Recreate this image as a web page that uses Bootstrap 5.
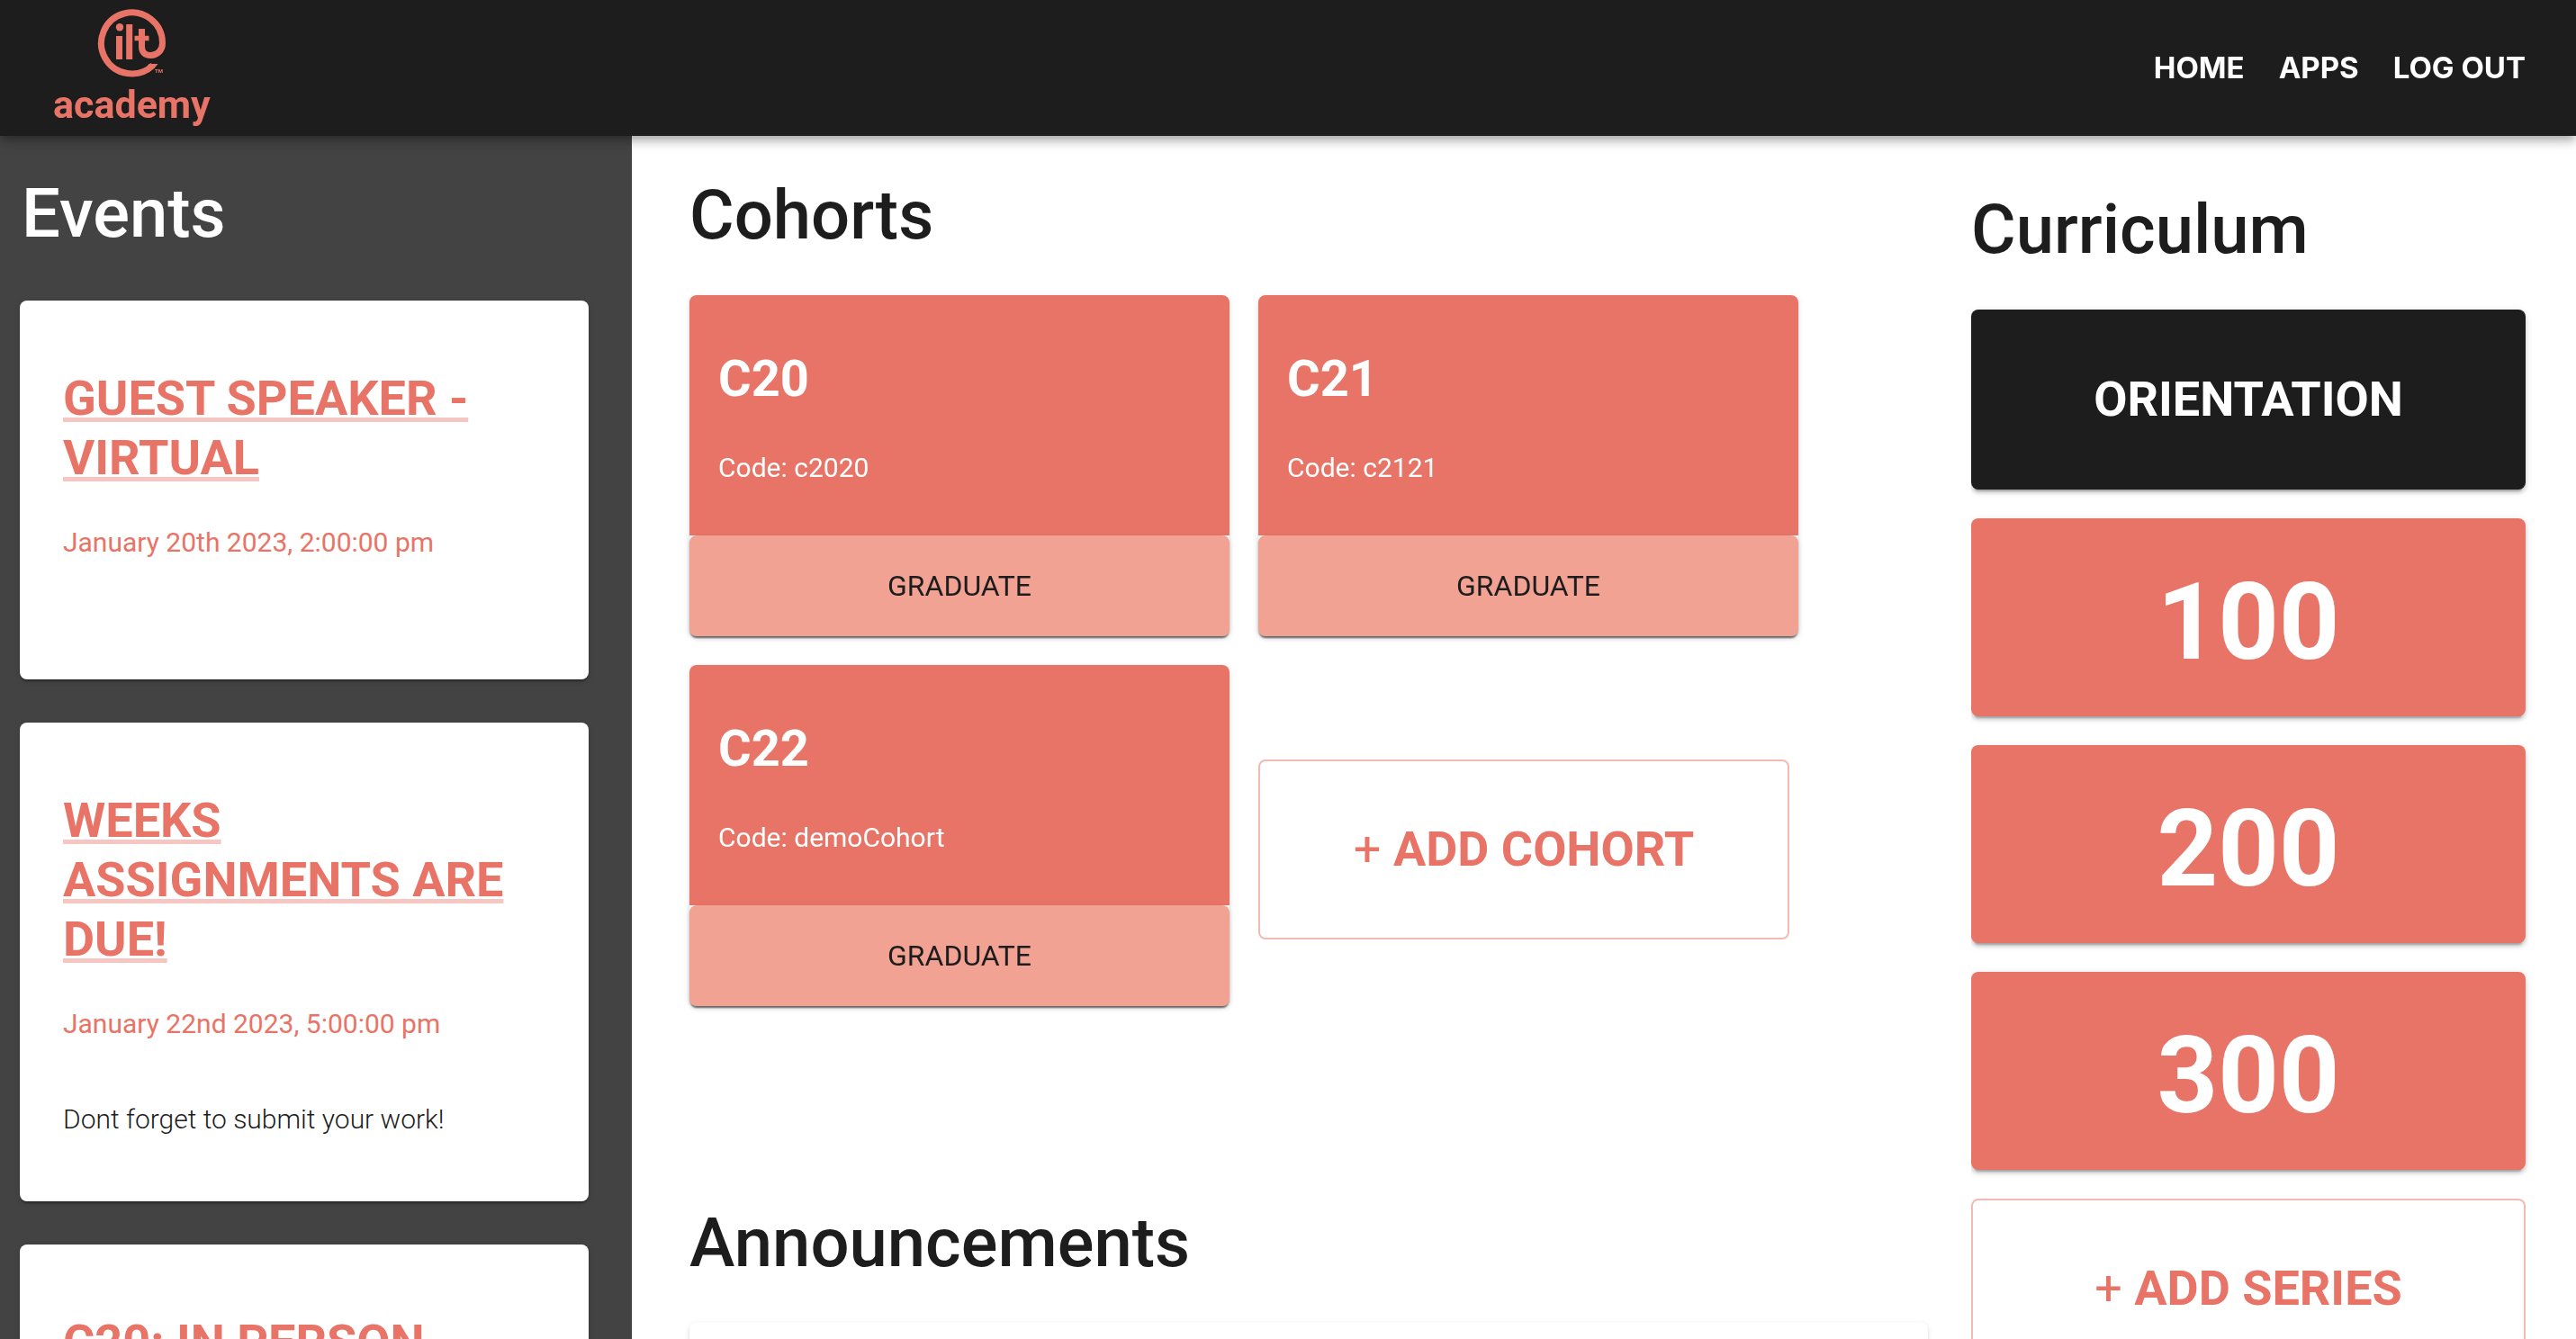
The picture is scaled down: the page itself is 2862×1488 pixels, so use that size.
<!DOCTYPE html>
<html lang="en">
<head>
<meta charset="utf-8">
<meta name="viewport" content="width=device-width, initial-scale=1">
<title>ILT Academy</title>
<link href="https://cdn.jsdelivr.net/npm/bootstrap@5.3.0/dist/css/bootstrap.min.css" rel="stylesheet">
<style>
  :root {
    --coral: #e87467;
    --coral-light: #f1a293;
    --ink: #1d1d1d;
    --raise-1: 0 4px 2px -2px rgba(0,0,0,.2), 0 2px 2px rgba(0,0,0,.14), 0 2px 6px rgba(0,0,0,.12);
    --raise-2: 0 6px 2px -4px rgba(0,0,0,.2), 0 4px 4px rgba(0,0,0,.14), 0 2px 10px rgba(0,0,0,.12);
  }
  body { font-family: Roboto, "Liberation Sans", sans-serif; font-size: 30px; line-height: 40px; color: var(--ink); }
  .topbar {
    height: 151px; padding: 0 56px 0 59px; background: var(--ink); z-index: 2;
    box-shadow: 0 4px 8px -2px rgba(0,0,0,.2), 0 8px 10px rgba(0,0,0,.14), 0 2px 20px rgba(0,0,0,.12);
  }
  .brand-mark { color: var(--coral); font-size: 43px; line-height: 48px; font-weight: 700; gap: 4px; padding-bottom: 4px; }
  .brand-mark svg { width: 80px; height: 80px; }
  .topbar nav { gap: 38px; font-family: Inter, sans-serif; font-size: 33px; font-weight: 700; padding-bottom: 2px; }
  .topbar nav a { color: #fff; }
  .events-panel { flex: 0 0 24.53%; background: #434343; padding: 38px 48px 0 22px; }
  .main-panel { padding: 40px 48px 0 64px; min-width: 0; }
  .series-panel { flex: 0 0 23.48%; padding: 56px 56px 0 0; }
  .panel { overflow: hidden auto; scrollbar-width: none; }
  .section-title { font-size: 76px; line-height: 96px; font-weight: 500; margin: 0 0 41px; }
  .events-panel .section-title { color: #fff; padding-left: 2px; margin-bottom: 49px; }
  .tile { border: 0; border-radius: 8px; background: #fff; box-shadow: var(--raise-1); }
  .event { min-height: 421px; padding: 76px 48px 71px; margin-bottom: 48px; }
  .tile-title { font-size: 56px; line-height: 66px; font-weight: 700; margin: 0; }
  .event .tile-title { font-size: 54px; }
  .event .tile-title a {
    color: var(--coral); text-decoration: underline; text-decoration-color: #f6c7c2;
    text-decoration-thickness: 5px; text-underline-offset: 3px; text-decoration-skip-ink: none;
  }
  .event time { color: var(--coral); display: block; margin-top: 41px; }
  .event p { font-weight: 300; margin: 66px 0 0; }
  .cohort-grid { display: grid; grid-template-columns: 1fr 1fr; gap: 32px; margin-right: 144px; }
  .cohort-info { background: var(--coral); color: #fff; border-radius: 8px 8px 0 0; padding: 60px 32px 55px; }
  .cohort-info p { font-weight: 400; margin: 46px 0 0; }
  .btn-graduate, .btn-graduate:hover { background: var(--coral-light); color: var(--ink); font-size: 32px; line-height: 40px; border: 0; border-radius: 8px; padding: 36px 16px; box-shadow: var(--raise-1); }
  .btn-add, .btn-add:hover { border: 2px solid #f4b9b3; border-radius: 8px; color: var(--coral); font-size: 54px; line-height: 66px; font-weight: 700; padding: 65px 16px; }
  .btn-add span { font-weight: 400; }
  .add-cohort { margin: 31px 10px 0 0; }
  .announce-title { margin-top: 215px; }
  .announcement { min-height: 300px; }
  .btn-series, .btn-series:hover { background: var(--coral); color: #fff; border: 0; border-radius: 8px; font-size: 118px; line-height: 132px; font-weight: 700; padding: 50px 16px 38px; box-shadow: var(--raise-2); }
  .btn-orientation, .btn-orientation:hover { background: var(--ink); color: #fff; border: 0; border-radius: 8px; font-size: 54px; line-height: 66px; font-weight: 700; padding: 67px 16px; box-shadow: var(--raise-2); }
  .series-list { gap: 32px; }
</style>
</head>
<body>
<div class="vh-100 d-flex flex-column overflow-hidden">
  <header class="topbar d-flex flex-shrink-0 justify-content-between align-items-center position-relative">
    <a href="#" class="brand-mark d-flex flex-column align-items-center text-decoration-none" aria-label="ilt academy">
      <svg viewBox="106 8 80 80" fill="none" stroke="currentColor" stroke-width="7" aria-hidden="true">
        <path d="M170 72.500A34 34 0 1 1 180.500 48C180.500 56 174.500 61.500 167.500 61.500C160.500 61.500 157.500 57.500 157.500 52V32"/>
        <path d="M149.500 42.500H165.500" stroke-width="5.500"/>
        <path d="M132.500 40V66M143.700 27V66"/>
        <circle cx="133" cy="30.300" r="4.200" fill="currentColor" stroke="none"/>
        <path d="M165.500 71H175.500Q172 76 168 78L162 76Z" fill="currentColor" stroke="none"/>
        <text x="172" y="81" font-size="6" fill="currentColor" stroke="none">TM</text>
      </svg>
      <span>academy</span>
    </a>
    <nav class="d-flex" aria-label="Main">
      <a class="text-decoration-none" href="#">HOME</a>
      <a class="text-decoration-none" href="#">APPS</a>
      <a class="text-decoration-none" href="#">LOG OUT</a>
    </nav>
  </header>

  <div class="d-flex flex-grow-1 overflow-hidden">
    <aside class="events-panel panel">
      <h2 class="section-title">Events</h2>
      <article class="tile event">
        <h3 class="tile-title"><a href="#">GUEST SPEAKER - VIRTUAL</a></h3>
        <time>January 20th 2023, 2:00:00 pm</time>
      </article>
      <article class="tile event">
        <h3 class="tile-title"><a href="#">WEEKS ASSIGNMENTS ARE DUE!</a></h3>
        <time>January 22nd 2023, 5:00:00 pm</time>
        <p>Dont forget to submit your work!</p>
      </article>
      <article class="tile event">
        <h3 class="tile-title"><a href="#">C20: IN PERSON</a></h3>
      </article>
    </aside>

    <main class="main-panel panel flex-grow-1">
      <h2 class="section-title">Cohorts</h2>
      <div class="cohort-grid">
        <article class="tile d-flex flex-column">
          <div class="cohort-info"><h3 class="tile-title">C20</h3><p>Code: c2020</p></div>
          <button type="button" class="btn btn-graduate">GRADUATE</button>
        </article>
        <article class="tile d-flex flex-column">
          <div class="cohort-info"><h3 class="tile-title">C21</h3><p>Code: c2121</p></div>
          <button type="button" class="btn btn-graduate">GRADUATE</button>
        </article>
        <article class="tile d-flex flex-column">
          <div class="cohort-info"><h3 class="tile-title">C22</h3><p>Code: demoCohort</p></div>
          <button type="button" class="btn btn-graduate">GRADUATE</button>
        </article>
        <button type="button" class="btn btn-add add-cohort align-self-center"><span>+</span> ADD COHORT</button>
      </div>
      <h2 class="section-title announce-title">Announcements</h2>
      <div class="tile announcement"></div>
    </main>

    <section class="series-panel panel">
      <h2 class="section-title">Curriculum</h2>
      <div class="series-list d-flex flex-column">
        <button type="button" class="btn btn-orientation">ORIENTATION</button>
        <button type="button" class="btn btn-series">100</button>
        <button type="button" class="btn btn-series">200</button>
        <button type="button" class="btn btn-series">300</button>
        <button type="button" class="btn btn-add"><span>+</span> ADD SERIES</button>
      </div>
    </section>
  </div>
</div>
<script src="https://cdn.jsdelivr.net/npm/bootstrap@5.3.0/dist/js/bootstrap.bundle.min.js"></script>
</body>
</html>
